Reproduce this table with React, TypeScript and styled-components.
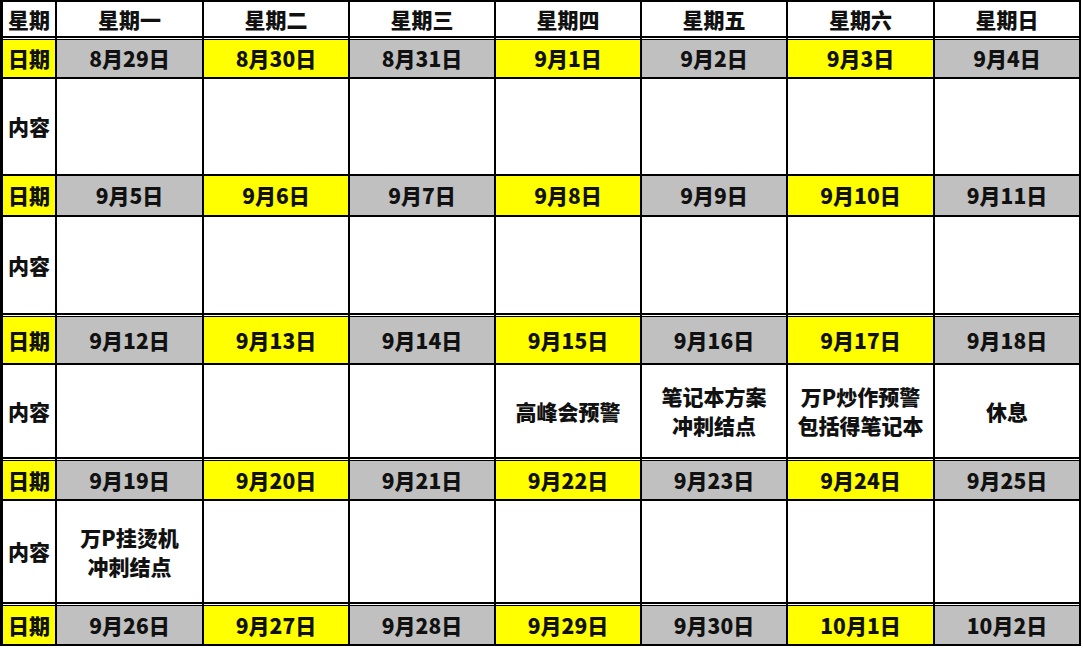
import styled, { createGlobalStyle, css } from 'styled-components';

const GlobalStyle = createGlobalStyle`
  html, body {
    margin: 0;
    padding: 0;
    background: #ffffff;
  }
  body {
    font-family: "Noto Sans CJK SC", "Noto Sans", sans-serif;
    color: #111;
  }
`;

type Tone = 'yellow' | 'grey' | 'white';

interface Week {
  dates: string[];
  notes: string[][];
  dateHeight: number;
  contentHeight: number;
  doubleLine: boolean;
}

const dayNames = ['星期一', '星期二', '星期三', '星期四', '星期五', '星期六', '星期日'];

const weeks: Week[] = [
  {
    dates: ['8月29日', '8月30日', '8月31日', '9月1日', '9月2日', '9月3日', '9月4日'],
    notes: [[], [], [], [], [], [], []],
    dateHeight: 39,
    contentHeight: 95,
    doubleLine: true,
  },
  {
    dates: ['9月5日', '9月6日', '9月7日', '9月8日', '9月9日', '9月10日', '9月11日'],
    notes: [[], [], [], [], [], [], []],
    dateHeight: 39,
    contentHeight: 96,
    doubleLine: false,
  },
  {
    dates: ['9月12日', '9月13日', '9月14日', '9月15日', '9月16日', '9月17日', '9月18日'],
    notes: [
      [],
      [],
      [],
      ['高峰会预警'],
      ['笔记本方案', '冲刺结点'],
      ['万P炒作预警', '包括得笔记本'],
      ['休息'],
    ],
    dateHeight: 48,
    contentHeight: 92,
    doubleLine: true,
  },
  {
    dates: ['9月19日', '9月20日', '9月21日', '9月22日', '9月23日', '9月24日', '9月25日'],
    notes: [['万P挂烫机', '冲刺结点'], [], [], [], [], [], []],
    dateHeight: 40,
    contentHeight: 101,
    doubleLine: true,
  },
];

const lastDates = ['9月26日', '9月27日', '9月28日', '9月29日', '9月30日', '10月1日', '10月2日'];

const rowHeights = [
  34,
  ...weeks.flatMap((w) => [w.dateHeight, w.contentHeight]),
  40,
];

const Sheet = styled.div`
  display: grid;
  grid-template-columns: 52px 145px 144px 144px 144px 144px 145px 144px;
  grid-template-rows: ${rowHeights.map((h) => `${h}px`).join(' ')};
  gap: 2px;
  padding: 2px 2px 2px 3px;
  background: #000;
  width: max-content;
`;

const toneColours: Record<Tone, string> = {
  yellow: '#ffff00',
  grey: '#c0c0c0',
  white: '#ffffff',
};

const Cell = styled.div<{ $tone?: Tone; $double?: boolean }>`
  display: flex;
  flex-direction: column;
  align-items: center;
  justify-content: center;
  background: ${({ $tone }) => toneColours[$tone ?? 'white']};
  font-size: 21px;
  font-weight: 900;
  line-height: 29px;
  color: #111;
  text-align: center;
  white-space: nowrap;
  ${({ $double }) =>
    $double &&
    css`
      box-shadow: inset 0 1px 0 #ffffff, inset 0 2px 0 #000;
      padding-top: 2px;
    `}
`;

const LabelCell = styled(Cell)`
  letter-spacing: 0;
`;

const NoteLine = styled.span`
  display: block;
`;

const toneFor = (col: number): Tone => (col % 2 === 0 ? 'grey' : 'yellow');

const DateRow = ({ dates, double }: { dates: string[]; double: boolean }) => (
  <>
    <LabelCell $tone="yellow" $double={double}>日期</LabelCell>
    {dates.map((d, i) => (
      <Cell key={d} $tone={toneFor(i)} $double={double}>
        {d}
      </Cell>
    ))}
  </>
);

const ContentRow = ({ notes }: { notes: string[][] }) => (
  <>
    <LabelCell>内容</LabelCell>
    {notes.map((lines, i) => (
      <Cell key={i}>
        {lines.map((l) => (
          <NoteLine key={l}>{l}</NoteLine>
        ))}
      </Cell>
    ))}
  </>
);

const DateAndContent = ({ week }: { week: Week }) => (
  <>
    <DateRow dates={week.dates} double={week.doubleLine} />
    <ContentRow notes={week.notes} />
  </>
);

const App = () => {
  return (
    <>
      <GlobalStyle />
      <Sheet>
        <LabelCell>星期</LabelCell>
        {dayNames.map((d) => (
          <Cell key={d}>{d}</Cell>
        ))}
        {weeks.map((w) => (
          <DateAndContent key={w.dates[0]} week={w} />
        ))}
        <DateRow dates={lastDates} double />
      </Sheet>
    </>
  );
};

export default App;
